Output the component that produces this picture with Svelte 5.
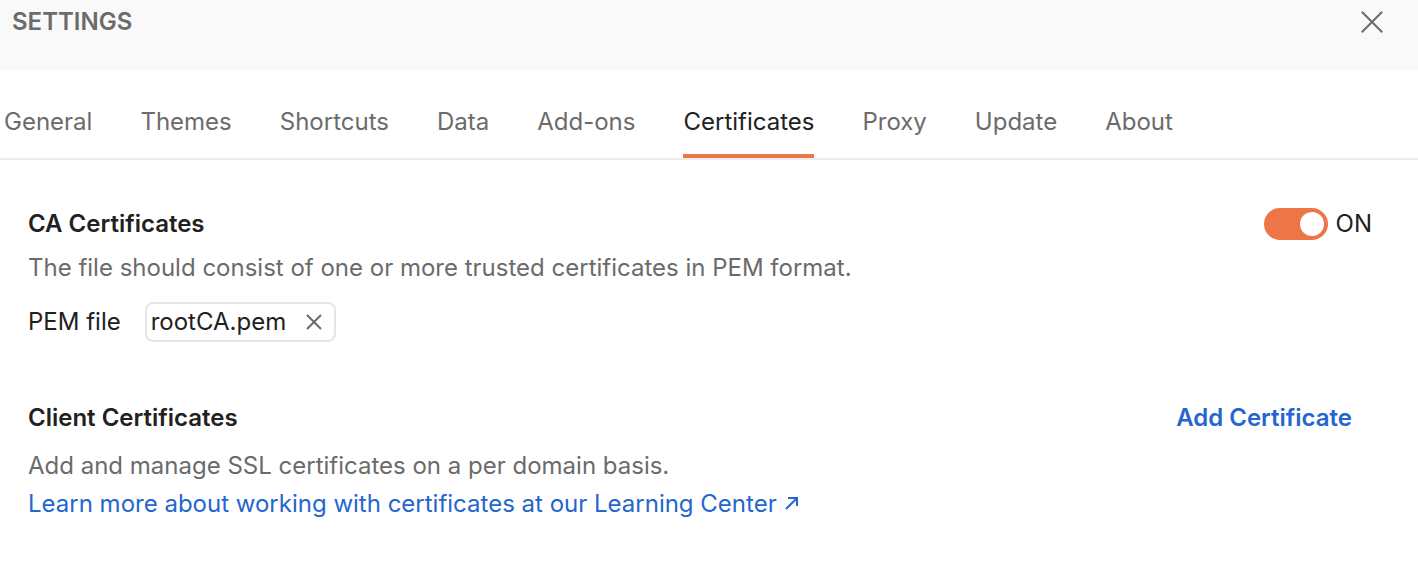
<script>
  const tabs = ['General', 'Themes', 'Shortcuts', 'Data', 'Add-ons', 'Certificates', 'Proxy', 'Update', 'About'];
  let active = $state('Certificates');
  let enabled = $state(true);
  let file = $state('rootCA.pem');
</script>

<div class="settings">
  <header>
    <h1>SETTINGS</h1>
    <button class="close" aria-label="Close settings">
      <svg width="24" height="24" viewBox="0 0 24 24"><path d="M1.8 1.8 22.2 22.2M22.2 1.8 1.8 22.2" /></svg>
    </button>
  </header>

  <nav aria-label="Settings sections">
    {#each tabs as tab}
      <button class="tab" class:active={tab === active} onclick={() => (active = tab)}>{tab}</button>
    {/each}
  </nav>

  <main>
    <section>
      <div class="heading">
        <h2>CA Certificates</h2>
        <label class="toggle">
          <input type="checkbox" role="switch" bind:checked={enabled} />
          <span>{enabled ? 'ON' : 'OFF'}</span>
        </label>
      </div>
      <p class="intro">The file should consist of one or more trusted certificates in PEM format.</p>
      <div class="file-row">
        <span class="file-label">PEM file</span>
        {#if file}
          <div class="file">
            <span>{file}</span>
            <button aria-label="Remove file" onclick={() => (file = '')}>
              <svg width="16" height="16" viewBox="0 0 16 16"><path d="M1 1 15 15M15 1 1 15" /></svg>
            </button>
          </div>
        {/if}
      </div>
    </section>

    <section class="client">
      <div class="heading">
        <h2>Client Certificates</h2>
        <button class="add">Add Certificate</button>
      </div>
      <p>Add and manage SSL certificates on a per domain basis.</p>
      <a href="#learning-center">Learn more about working with certificates at our Learning Center
        <svg width="14" height="16" viewBox="0 0 14 16"><path d="M1 13 12 2M3 2H12V10" /></svg></a>
    </section>
  </main>
</div>

<style>
  :global(body) {
    margin: 0;
    background: #fff;
  }
  .settings {
    font-family: Inter, sans-serif;
    font-size: 24px;
    line-height: 32px;
    color: #212121;
  }
  h1, h2, p {
    margin: 0;
    font-size: 24px;
    line-height: 32px;
  }
  h2 {
    font-weight: 600;
  }
  p {
    color: #6b6b6b;
  }
  button {
    padding: 0;
    border: 0;
    background: none;
    font: inherit;
    color: inherit;
    cursor: pointer;
  }
  svg {
    fill: none;
    stroke: #6b6b6b;
    stroke-width: 2;
  }
  header {
    display: flex;
    justify-content: space-between;
    align-items: flex-start;
    padding: 6px 34px 32px 12px;
    background: #f9f9f9;
  }
  h1 {
    font-weight: 600;
    color: #6b6b6b;
  }
  .close {
    display: flex;
    padding: 4px 0;
  }
  nav {
    display: flex;
    gap: 48px;
    padding: 36px 4px 0;
    border-bottom: 2px solid #ededed;
  }
  .tab {
    padding-bottom: 16px;
    border-bottom: 4px solid transparent;
    color: #6b6b6b;
  }
  .tab.active {
    border-color: #ed7547;
    color: #212121;
  }
  main {
    padding: 48px 46px 48px 28px;
  }
  .heading {
    display: flex;
    justify-content: space-between;
    align-items: center;
  }
  .intro {
    margin-top: 12px;
  }
  .toggle {
    display: flex;
    align-items: center;
    gap: 8px;
  }
  .toggle input {
    appearance: none;
    display: flex;
    box-sizing: border-box;
    width: 64px;
    height: 32px;
    margin: 0;
    padding: 4px;
    border-radius: 16px;
    background: #a6a6a6;
  }
  .toggle input::before {
    content: '';
    width: 24px;
    height: 24px;
    border-radius: 50%;
    background: #fff;
  }
  .toggle input:checked {
    justify-content: flex-end;
    background: #ed7547;
  }
  .file-row {
    display: flex;
    align-items: center;
    gap: 24px;
    margin-top: 18px;
  }
  .file {
    display: flex;
    align-items: center;
    gap: 20px;
    padding: 2px 12px 2px 4px;
    border: 2px solid #e6e6e6;
    border-radius: 8px;
  }
  .file button {
    display: flex;
  }
  .client {
    margin-top: 60px;
  }
  .client p {
    margin: 16px 0 6px;
  }
  .add {
    margin-right: 20px;
    font-weight: 600;
    color: #2466cd;
  }
  a {
    color: #2466cd;
    text-decoration: none;
  }
  a svg {
    margin-left: 2px;
    stroke: #2466cd;
  }
</style>
